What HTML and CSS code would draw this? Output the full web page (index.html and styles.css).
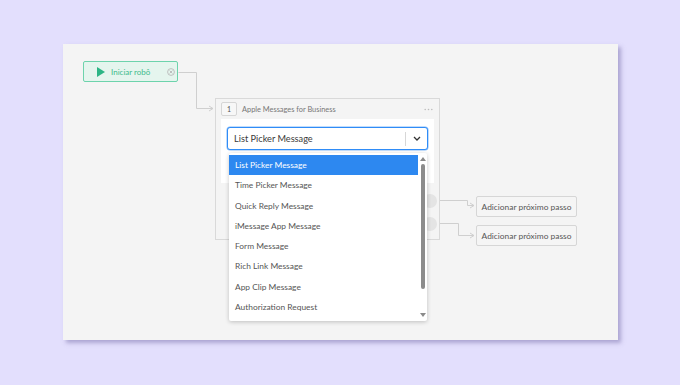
FILE: index.html
```html
<!DOCTYPE html>
<html lang="pt">
    <head>
        <meta charset="UTF-8" />
        <title>Fluxo do robô</title>
        <link rel="stylesheet" href="styles.css">
    </head>
    <body>
        <div class="canvas">
            <!-- linhas de conexão -->
            <svg class="wires" width="555" height="296" viewBox="0 0 555 296">
                <g fill="none" stroke="#cfcfcf" stroke-width="1">
                    <path d="M115.5 28.5 H133.5 V64.5 H150" />
                    <path d="M146 62 L150 64.5 L146 67" />
                    <path d="M364 156.5 H404.5 V161.5 H411" />
                    <path d="M407 159 L411 161.5 L407 164" />
                    <path d="M364 179.5 H395.5 V191.5 H411" />
                    <path d="M407 189 L411 191.5 L407 194" />
                </g>
            </svg>

            <!-- início -->
            <div class="start">
                <svg class="play" width="8" height="10" viewBox="0 0 8 10"><path d="M0 0 L8 5 L0 10 Z" fill="#2cb585"/></svg>
                <span>Iniciar robô</span>
                <span class="close">
                    <svg width="8" height="8" viewBox="0 0 8 8">
                        <circle cx="4" cy="4" r="3.4" fill="none" stroke="#b9b9b9" stroke-width="0.9"/>
                        <path d="M2.6 2.6 L5.4 5.4 M5.4 2.6 L2.6 5.4" stroke="#b9b9b9" stroke-width="0.9"/>
                    </svg>
                </span>
            </div>

            <!-- passo 1 -->
            <div class="step">
                <div class="step-head">
                    <span class="num">1</span>
                    <span class="title">Apple Messages for Business</span>
                    <svg class="more" width="9" height="3" viewBox="0 0 9 3">
                        <circle cx="1.2" cy="1.5" r="0.8" fill="#bdbdbd"/>
                        <circle cx="4.5" cy="1.5" r="0.8" fill="#bdbdbd"/>
                        <circle cx="7.8" cy="1.5" r="0.8" fill="#bdbdbd"/>
                    </svg>
                </div>
                <div class="step-body">
                    <div class="select">
                        <span class="value">List Picker Message</span>
                        <span class="sep"></span>
                        <svg class="chev" width="8" height="5" viewBox="0 0 8 5"><path d="M1 1 L4 4 L7 1" fill="none" stroke="#333" stroke-width="1.3"/></svg>
                    </div>
                </div>
                <span class="port p1"></span>
                <span class="port p2"></span>
            </div>

            <button class="next n1">Adicionar próximo passo</button>
            <button class="next n2">Adicionar próximo passo</button>

            <!-- lista aberta -->
            <div class="menu">
                <ul class="opts">
                    <li class="on">List Picker Message</li>
                    <li>Time Picker Message</li>
                    <li>Quick Reply Message</li>
                    <li>iMessage App Message</li>
                    <li>Form Message</li>
                    <li>Rich Link Message</li>
                    <li>App Clip Message</li>
                    <li>Authorization Request</li>
                </ul>
                <div class="bar">
                    <span class="up"></span>
                    <span class="thumb"></span>
                    <span class="down"></span>
                </div>
            </div>
        </div>
    </body>
</html>
```
FILE: styles.css
```css
* {
    box-sizing: border-box;
}

body {
    margin: 0;
    width: 680px;
    height: 385px;
    background-color: #e3dffd;
    font-family: "Lato", "Open Sans", sans-serif;
    overflow: hidden;
    padding: 44px 0 0 63px;
}

/* area do fluxo */
.canvas {
    position: relative;
    width: 555px;
    height: 296px;
    background-color: #f4f4f4;
    box-shadow: 3px 3px 4px rgba(120, 110, 170, 0.5);
}

.wires {
    position: absolute;
    top: 0;
    left: 0;
}

/* nó inicial */
.start {
    position: absolute;
    top: 17px;
    left: 20px;
    width: 95px;
    height: 21px;
    display: flex;
    align-items: center;
    padding-left: 13px;
    background-color: #e5f5ee;
    border: 1px solid #6dd3ac;
    border-radius: 2px;
    color: #3dbb8c;
    font-size: 8px;
}
.play {
    margin-right: 6px;
}
.close {
    margin-left: auto;
    margin-right: 2px;
    display: flex;
}

/* card do passo */
.step {
    position: absolute;
    top: 54px;
    left: 152px;
    width: 225px;
    height: 142px;
    border: 1px solid #d9d9d9;
    background-color: #f4f4f4;
}
.step-head {
    display: flex;
    align-items: center;
    height: 20px;
    padding: 0 6px 0 5px;
}
.num {
    width: 16px;
    height: 14px;
    border: 1px solid #d6d6d6;
    border-radius: 2px;
    background-color: #f7f7f7;
    font-size: 7px;
    color: #555;
    text-align: center;
    line-height: 12px;
}
.title {
    margin-left: 5px;
    font-size: 7.4px;
    color: #777;
}
.more {
    margin-left: auto;
}
.step-body {
    margin: 0 5px;
    height: 64px;
    background-color: #fff;
    padding: 8px 6px;
}
.select {
    display: flex;
    align-items: center;
    height: 23px;
    border: 1px solid #2f8cf7;
    box-shadow: 0 0 0 0.5px rgba(47, 140, 247, 0.6);
    border-radius: 3px;
    padding: 0 6px 0 6px;
    background-color: #fff;
}
.value {
    font-size: 9.2px;
    color: #3a3a3a;
}
.sep {
    margin-left: auto;
    width: 1px;
    height: 14px;
    background-color: #d7d7d7;
}
.chev {
    margin-left: 7px;
}

/* saídas */
.port {
    position: absolute;
    right: 2px;
    width: 14px;
    height: 14px;
    border-radius: 50%;
    background-color: #e4e4e4;
}
.p1 {
    top: 95px;
}
.p2 {
    top: 118px;
}

.next {
    position: absolute;
    left: 413px;
    width: 101px;
    height: 21px;
    padding: 0;
    border: 1px solid #d6d6d6;
    border-radius: 2px;
    background-color: #f5f5f5;
    color: #555;
    font-family: inherit;
    font-size: 8.4px;
}
.n1 {
    top: 152px;
}
.n2 {
    top: 181px;
}

/* dropdown aberto */
.menu {
    position: absolute;
    top: 109px;
    left: 166px;
    width: 198px;
    height: 168px;
    display: flex;
    padding: 2px 0 2px 0;
    background-color: #fff;
    box-shadow: 0 1px 4px rgba(0, 0, 0, 0.22);
    border-radius: 2px;
}
.opts {
    flex: 1;
    margin: 0;
    padding: 0;
    list-style: none;
}
.opts li {
    height: 20.3px;
    line-height: 20.3px;
    padding-left: 6px;
    font-size: 8.4px;
    color: #555;
}
.opts li.on {
    background-color: #2d88f0;
    color: #fff;
}
.bar {
    width: 9px;
    display: flex;
    flex-direction: column;
    align-items: center;
}
.up,
.down {
    width: 0;
    height: 0;
    border-left: 3px solid transparent;
    border-right: 3px solid transparent;
}
.up {
    margin-top: 2px;
    border-bottom: 4px solid #8a8a8a;
}
.down {
    margin-bottom: 2px;
    border-top: 4px solid #8a8a8a;
}
.thumb {
    width: 4px;
    flex: 1;
    margin: 3px 0 24px;
    background-color: #8c8c8c;
    border-radius: 2px;
}
```
